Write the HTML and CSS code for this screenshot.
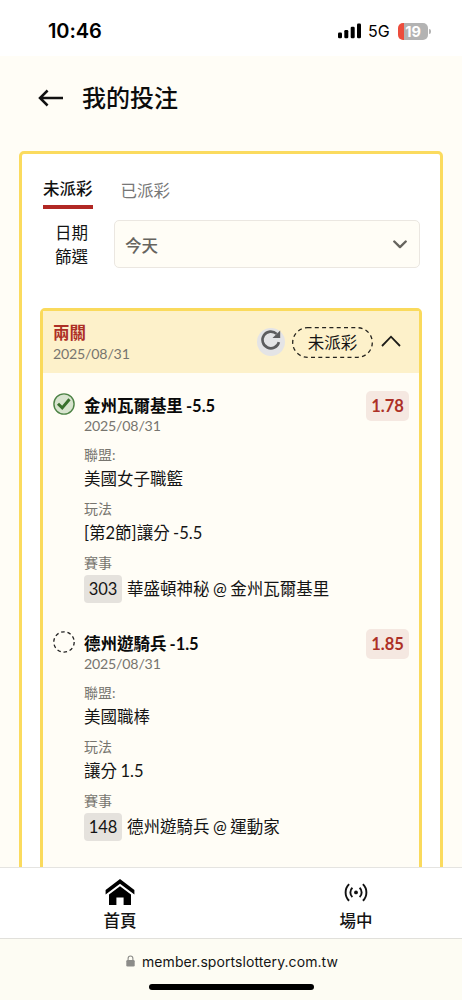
FILE: index.html
```html
<!DOCTYPE html>
<html lang="zh-Hant">
<head>
<meta charset="utf-8">
<meta name="viewport" content="width=device-width, initial-scale=1">
<title>我的投注</title>
<link rel="stylesheet" href="styles.css">
</head>
<body>
<div class="phone">
  <div class="status">
    <span class="time">10:46</span>
    <div class="signals">
      <svg class="bars" width="24" height="16" viewBox="0 0 24 16"><rect x="0" y="9.6" width="4" height="5.6" rx="1.2"/><rect x="6.3" y="7" width="4" height="8.2" rx="1.2"/><rect x="12.7" y="3.8" width="4" height="11.4" rx="1.2"/><rect x="19" y="0.6" width="4" height="14.6" rx="1.2"/></svg>
      <span class="net">5G</span>
      <span class="battery">19</span>
      <span class="nub"></span>
    </div>
  </div>

  <main class="main">
    <header class="header">
      <svg width="26" height="18" viewBox="0 0 26 18" fill="none" stroke="#111" stroke-width="2.5"><path d="M25 9H2M9.6 1.5 2 9l7.6 7.5"/></svg>
      <h1 class="title">我的投注</h1>
    </header>

    <section class="panel">
      <nav class="tabs">
        <span class="tab tab-on">未派彩</span>
        <span class="tab">已派彩</span>
      </nav>
      <div class="filter">
        <div class="filter-label">日期<br>篩選</div>
        <div class="select">
          <span>今天</span>
          <svg width="14" height="9" viewBox="0 0 14 9" fill="none" stroke="#66645e" stroke-width="2.4" stroke-linecap="round" stroke-linejoin="round"><path d="M1.3 1.5 7 7.1l5.7-5.6"/></svg>
        </div>
      </div>

      <article class="slip">
        <div class="slip-head">
          <div class="slip-name">
            <div class="slip-type">兩關</div>
            <div class="date">2025/08/31</div>
          </div>
          <span class="refresh">
            <svg width="22" height="22" viewBox="0 0 22 22"><path d="M18.9 13.1A8.35 8.35 0 1 1 16.6 4.9" fill="none" stroke="#5c5c5e" stroke-width="2.6"/><path d="M20.2 1.4V9h-7.7z" fill="#5c5c5e"/></svg>
          </span>
          <span class="pill"><svg class="pill-line" width="81" height="31" viewBox="0 0 81 31"><rect x=".7" y=".7" width="79.6" height="29.6" rx="14.8"/></svg>未派彩</span>
          <svg class="fold" width="20" height="12" viewBox="0 0 20 12" fill="none" stroke="#1c1c18" stroke-width="1.8"><path d="m1 11 9-9.3 9 9.3"/></svg>
        </div>

        <div class="bets">
          <div class="bet">
            <svg class="mark" width="22" height="22" viewBox="0 0 22 22"><circle cx="11" cy="11" r="10.1" fill="#d8e4cf" stroke="#4c8245" stroke-width="1.4"/><path d="m5 10.8 4.2 4.1 7.3-8.7" fill="none" stroke="#39702e" stroke-width="3"/></svg>
            <div class="bet-body">
              <div class="pick">金州瓦爾基里 -5.5</div>
              <div class="date">2025/08/31</div>
              <dl class="facts">
                <dt>聯盟:</dt><dd>美國女子職籃</dd>
                <dt>玩法</dt><dd>[第2節]讓分 -5.5</dd>
                <dt>賽事</dt><dd class="match"><span class="chip">303</span>華盛頓神秘 @ 金州瓦爾基里</dd>
              </dl>
            </div>
            <span class="odds">1.78</span>
          </div>

          <div class="bet">
            <svg class="mark" width="22" height="22" viewBox="0 0 22 22"><circle cx="11" cy="11" r="10.2" fill="none" stroke="#222" stroke-width="1.3" stroke-dasharray="3.6 2.81"/></svg>
            <div class="bet-body">
              <div class="pick">德州遊騎兵 -1.5</div>
              <div class="date">2025/08/31</div>
              <dl class="facts">
                <dt>聯盟:</dt><dd>美國職棒</dd>
                <dt>玩法</dt><dd>讓分 1.5</dd>
                <dt>賽事</dt><dd class="match"><span class="chip">148</span>德州遊騎兵 @ 運動家</dd>
              </dl>
            </div>
            <span class="odds">1.85</span>
          </div>
        </div>
      </article>
    </section>
  </main>

  <nav class="dock">
    <div class="dock-item">
      <svg width="30" height="28" viewBox="0 0 30 28"><path d="M15 1 29.4 12.1v4.5L15 5.7.6 16.6v-4.5z"/><path d="M15 8.2 26 16.5V27h-7.4v-7.6h-7.2V27H4V16.5z"/></svg>
      <span>首頁</span>
    </div>
    <div class="dock-item">
      <svg width="24" height="28" viewBox="0 0 24 28" fill="none" stroke="#111" stroke-width="1.9"><circle cx="12" cy="14.4" r="1.9" fill="#111" stroke="none"/><path d="M8.4 9.8a6.2 6.2 0 0 0 0 9.2M15.6 9.8a6.2 6.2 0 0 1 0 9.2M5.1 6.1a11.6 11.6 0 0 0 0 16.6M18.9 6.1a11.6 11.6 0 0 1 0 16.6"/></svg>
      <span>場中</span>
    </div>
  </nav>

  <footer class="browser">
    <div class="address">
      <svg width="9" height="12" viewBox="0 0 9 12"><rect x=".3" y="5" width="8.4" height="6.6" rx="1.3" fill="#8c8c89"/><path d="M2.1 5.5V3.4a2.4 2.4 0 0 1 4.8 0v2.1" fill="none" stroke="#8c8c89" stroke-width="1.1"/></svg>
      <span>member.sportslottery.com.tw</span>
    </div>
    <div class="home-bar"></div>
  </footer>
</div>
</body>
</html>
```
FILE: styles.css
```css
* { box-sizing: border-box; }
body {
  margin: 0;
  color: #141414;
  font-family: Lato, "Noto Sans CJK TC", sans-serif;
  font-size: 16.5px;
}
.phone { display: flex; flex-direction: column; width: 462px; height: 1000px; overflow: hidden; }

.status {
  flex: none;
  display: flex;
  align-items: center;
  justify-content: space-between;
  height: 56px;
  padding: 6px 31px 0 48px;
  background: #fff;
  font-family: Inter, sans-serif;
}
.time { font-size: 20px; font-weight: 600; letter-spacing: -.1px; color: #000; }
.signals { display: flex; align-items: center; }
.net { margin-left: 6px; width: 30px; font-size: 16px; font-weight: 400; letter-spacing: 0; color: #000; }
.battery {
  width: 30px;
  height: 17px;
  border-radius: 5px;
  background: linear-gradient(90deg, #ec4d3d 6px, #b3b3b3 6px);
  color: #fff;
  font-size: 14.5px;
  font-weight: 700;
  line-height: 17px;
  text-align: center;
}
.nub { width: 2px; height: 5px; margin-left: 1px; border-radius: 0 2px 2px 0; background: #b3b3b3; }

.main { flex: none; height: 811px; padding: 0 19px; overflow: hidden; background: #fffdf6; }
.header { display: flex; align-items: center; gap: 18px; height: 95px; padding: 0 0 12px 19px; }
.title { margin: 0; font-size: 24px; font-weight: 500; line-height: 36px; color: #0c0c0c; }

.panel {
  height: 760px;
  padding: 21px 18px 0;
  border: 3px solid #fbdb5e;
  border-radius: 5px;
  background: #fff;
}
.tabs { display: flex; gap: 28px; height: 34px; padding-left: 3px; }
.tab { padding-top: 4px; color: #777; line-height: 24px; }
.tab-on { height: 34px; padding-top: 2px; border-bottom: 4px solid #b12824; color: #111; font-weight: 500; }

.filter { display: flex; gap: 26px; padding: 11px 0 0 15px; }
.filter-label { width: 33px; padding-top: 1px; line-height: 24px; }
.select {
  display: flex;
  align-items: center;
  justify-content: space-between;
  width: 306px;
  height: 48px;
  padding: 1px 12px 0 10px;
  border: 1.5px solid #ebe7e1;
  border-radius: 5px;
  background: #fffdf6;
  color: #66645e;
  font-weight: 500;
}

.slip { width: 382px; height: 640px; margin-top: 39px; border: 3px solid #fada5c; border-radius: 5px; background: #fffdf6; }
.slip-head { display: flex; align-items: center; height: 62px; padding: 0 19px 0 10px; background: #fdf1ca; }
.slip-name { flex: 1; }
.slip-type { color: #ad3026; font-weight: 700; line-height: 24px; }
.slip-name .date { line-height: 18px; }
.date { color: #77756f; font-size: 14.2px; letter-spacing: -.2px; line-height: 18px; }
.refresh { display: flex; justify-content: center; width: 28px; height: 28px; margin-right: 7px; padding-top: 1px; border-radius: 50%; background: #e4e4e6; }
.pill { position: relative; width: 81px; height: 31px; margin-right: 8px; line-height: 32px; text-align: center; }
.pill-line { position: absolute; inset: 0; fill: none; stroke: #24231e; stroke-width: 1.3; stroke-dasharray: 4 3.3; }
.fold { margin: -3px -1px 0 0; }

.bets { display: flex; flex-direction: column; gap: 26px; padding: 20px 10px 0 10px; }
.bet { display: flex; align-items: flex-start; }
.mark { flex: none; }
.bet-body { flex: 1; padding-left: 9px; }
.pick { height: 24px; padding-top: 1px; color: #0a0a0a; font-weight: 700; letter-spacing: -.03px; line-height: 24px; word-spacing: -.8px; }
.odds {
  width: 43px;
  height: 30px;
  margin-top: -2px;
  border-radius: 5px;
  background: #f5e8e1;
  color: #ad3026;
  font-weight: 700;
  line-height: 31px;
  text-align: center;
}
.facts { width: 280px; margin: 10px 0 0; }
.facts dt { color: #77756f; font-size: 14px; line-height: 20px; }
.facts dd { height: 26px; margin: 0 0 8px; padding-top: 1px; line-height: 26px; white-space: nowrap; word-spacing: -.8px; }
.facts .match { display: flex; align-items: center; gap: 5px; height: 32px; margin: 0; padding: 0; line-height: 28px; }
.chip { width: 38px; height: 28px; border-radius: 4px; background: #e5e2dd; line-height: 29px; text-align: center; }

.dock { flex: none; display: flex; height: 71px; padding: 0 0 0 2px; border-top: 1px solid #e5e4e1; background: #fff; }
.dock-item { flex: none; display: flex; flex-direction: column; align-items: center; width: 236px; padding-top: 10px; font-weight: 500; line-height: 30px; }

.browser { flex: 1; display: flex; flex-direction: column; align-items: center; padding-top: 12px; border-top: 1px solid #e1e0db; background: #fdfcf3; }
.address { display: flex; align-items: center; gap: 7px; height: 20px; padding-left: 2px; font-family: Inter, sans-serif; font-size: 14px; letter-spacing: .08px; }
.home-bar { width: 165px; height: 6px; margin-top: 13px; border-radius: 3px; background: #000; }
```
